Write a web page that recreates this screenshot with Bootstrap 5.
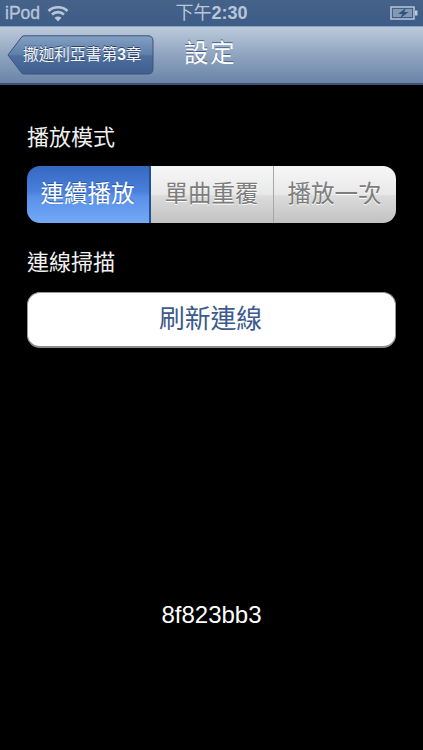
<!DOCTYPE html>
<html lang="zh-Hant">
<head>
<meta charset="utf-8">
<title>設定</title>
<link href="https://cdn.jsdelivr.net/npm/bootstrap@5.3.0/dist/css/bootstrap.min.css" rel="stylesheet">
<style>
html,body{background:#000;margin:0;height:750px;overflow:hidden}
body{font-family:"Liberation Sans","Noto Sans CJK TC",sans-serif;color:#fff;width:423px}
.stat-bar{height:27px;background:linear-gradient(#456389,#3d5c87);color:#b9c6d8;padding:0 5px 0 5px;border-bottom:1px solid #8fa3bf}
.stat-carrier{font-size:17.500px;line-height:26px;margin-right:7px;-webkit-text-stroke:.3px #b9c6d8}
.stat-time{position:absolute;left:0;right:0;top:0;text-align:center;font-size:18px;line-height:26px;font-weight:700;padding-right:0}
.stat-time span{font-weight:400}
.nav-strip{height:58px;background:linear-gradient(#bccadc,#8fa4c0 50%,#6a84a8);border-bottom:2px solid #3d5273;padding-left:7px;gap:31px}
.back-btn{position:relative;width:147px;height:40px;border:0;background:none;padding:0 0 0 16px;color:#f2f5f9;font-size:15.700px;line-height:40px;text-align:left;white-space:nowrap;text-shadow:0 -1px 0 #2d4365}
.back-btn svg{position:absolute;left:0;top:0}
.back-btn b{font-weight:700}
.back-lbl{position:relative}
.nav-title{font-size:24.500px;letter-spacing:1.500px;color:#fff;text-shadow:0 -1px 0 #4c6387;line-height:1;margin-top:-2px;margin-left:-1px}
.pane{padding:0 27px}
.sec-label{font-size:22px;line-height:28px;color:#f0f0f0;height:28px}
.seg-wrap{height:57px;border-radius:13px;overflow:hidden;margin-top:14px}
.seg-item{flex:1 1 0;font-size:23.500px;padding-right:1px;color:#7d7d7d;text-shadow:0 1px 0 #fff;background:linear-gradient(#f7f7f7,#e8e8e8 50%,#dcdcdc 52%,#c2c2c2);border-right:1px solid #a8a8a8}
.seg-item:last-child{border-right:0}
.seg-on{color:#fff;text-shadow:0 -1px 0 #2a5aa8;background:linear-gradient(#3568c0,#4a80dc 45%,#5a91e8 55%,#74a9f6);border-right:2px solid #24508f}
.wide-btn{height:56px;width:100%;background:#fff;border:1px solid #999;border-bottom:2px solid #8c8c8c;border-radius:13px;color:#3d5a8c;font-size:25.800px;line-height:1;padding:0 2px 0 0;margin-top:15px}
.code-line{font-size:24px;line-height:28px;color:#fff;text-align:center;margin-top:253px}
.first-label{margin-top:39px}
.next-label{margin-top:26px}
</style>
</head>
<body>
<div class="stat-bar d-flex align-items-center position-relative">
  <span class="stat-carrier">iPod</span>
  <svg width="22" height="18" viewBox="0 0 22 18" fill="none" stroke="#b9c6d8" stroke-width="2.600"><path d="M1.500 7C6.500 2 15.500 2 20.500 7"/><path d="M5 10.500C8.500 7.300 13.500 7.300 17 10.500"/><path d="M11 17.500L7.500 13.800C9.500 12 12.500 12 14.500 13.800Z" fill="#b9c6d8" stroke="none"/></svg>
  <div class="stat-time"><span>下午</span>2:30</div>
  <svg class="ms-auto" width="28" height="14" viewBox="0 0 28 14"><rect x="1" y="1" width="23" height="12" fill="none" stroke="#b9c6d8" stroke-width="1.500"/><rect x="3" y="3" width="19" height="8" fill="#b9c6d8" opacity=".55"/><rect x="25" y="4.500" width="2.500" height="5" fill="#b9c6d8"/><path d="M16 2L8 8H12.500L10 12.500L18.500 6H14Z" fill="#33507c"/></svg>
</div>
<div class="nav-strip d-flex align-items-center">
  <button type="button" class="back-btn">
    <svg width="147" height="40" viewBox="0 0 147 40"><defs><linearGradient id="bk" x1="0" y1="0" x2="0" y2="1"><stop offset="0" stop-color="#84a0c4"/><stop offset=".5" stop-color="#5f7fa9"/><stop offset=".52" stop-color="#4e6f9d"/><stop offset="1" stop-color="#3e5f8f"/></linearGradient></defs><path d="M1 20L15 1.500Q16 .800 18 .800H141Q146 .800 146 6V34Q146 39 141 39H18Q16 39 15 38.500Z" fill="url(#bk)" stroke="#3c5475" stroke-width="1"/></svg>
    <span class="back-lbl">撒迦利亞書第<b>3</b>章</span>
  </button>
  <div class="nav-title">設定</div>
</div>
<div class="pane">
  <div class="sec-label first-label">播放模式</div>
  <div class="seg-wrap d-flex">
    <div class="seg-item seg-on d-flex align-items-center justify-content-center">連續播放</div>
    <div class="seg-item d-flex align-items-center justify-content-center">單曲重覆</div>
    <div class="seg-item d-flex align-items-center justify-content-center">播放一次</div>
  </div>
  <div class="sec-label next-label">連線掃描</div>
  <button type="button" class="wide-btn">刷新連線</button>
</div>
<div class="code-line">8f823bb3</div>
<script src="https://cdn.jsdelivr.net/npm/bootstrap@5.3.0/dist/js/bootstrap.bundle.min.js"></script>
</body>
</html>
